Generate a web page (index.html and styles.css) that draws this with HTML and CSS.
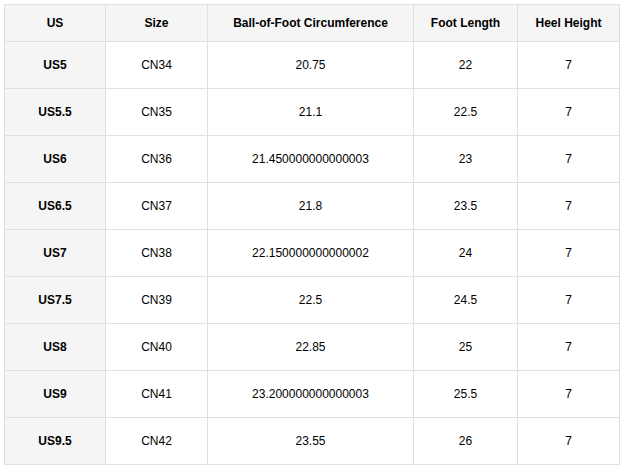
FILE: index.html
```html
<!DOCTYPE html>
<html>
<head>
<meta charset="utf-8">
<link rel="stylesheet" href="styles.css">
</head>
<body>
<table class="size-table">
  <colgroup>
    <col class="c-us"><col class="c-size"><col class="c-ball"><col class="c-foot"><col class="c-heel">
  </colgroup>
  <thead>
    <tr><th>US</th><th>Size</th><th>Ball-of-Foot Circumference</th><th>Foot Length</th><th>Heel Height</th></tr>
  </thead>
  <tbody>
    <tr><td class="us">US5</td><td>CN34</td><td>20.75</td><td>22</td><td>7</td></tr>
    <tr><td class="us">US5.5</td><td>CN35</td><td>21.1</td><td>22.5</td><td>7</td></tr>
    <tr><td class="us">US6</td><td>CN36</td><td>21.450000000000003</td><td>23</td><td>7</td></tr>
    <tr><td class="us">US6.5</td><td>CN37</td><td>21.8</td><td>23.5</td><td>7</td></tr>
    <tr><td class="us">US7</td><td>CN38</td><td>22.150000000000002</td><td>24</td><td>7</td></tr>
    <tr><td class="us">US7.5</td><td>CN39</td><td>22.5</td><td>24.5</td><td>7</td></tr>
    <tr><td class="us">US8</td><td>CN40</td><td>22.85</td><td>25</td><td>7</td></tr>
    <tr><td class="us">US9</td><td>CN41</td><td>23.200000000000003</td><td>25.5</td><td>7</td></tr>
    <tr><td class="us">US9.5</td><td>CN42</td><td>23.55</td><td>26</td><td>7</td></tr>
  </tbody>
</table>
</body>
</html>
```
FILE: styles.css
```css
html, body {
  margin: 0;
  padding: 0;
  background: #ffffff;
}
body {
  padding: 4px;
  font-family: "Liberation Sans", Arial, sans-serif;
  font-size: 12px;
  color: #000;
}
.size-table {
  border-collapse: collapse;
  table-layout: fixed;
  width: 616px;
}
.c-us { width: 101px; }
.c-size { width: 102px; }
.c-ball { width: 206px; }
.c-foot { width: 104px; }
.c-heel { width: 102px; }
.size-table th,
.size-table td {
  border: 1px solid #e0e0e0;
  text-align: center;
  vertical-align: middle;
  line-height: 14px;
}
.size-table th {
  background: #f5f5f5;
  font-weight: bold;
  padding: 11px 4px;
}
.size-table td {
  padding: 16px 4px;
}
.size-table td.us {
  background: #f5f5f5;
  font-weight: bold;
}
```
